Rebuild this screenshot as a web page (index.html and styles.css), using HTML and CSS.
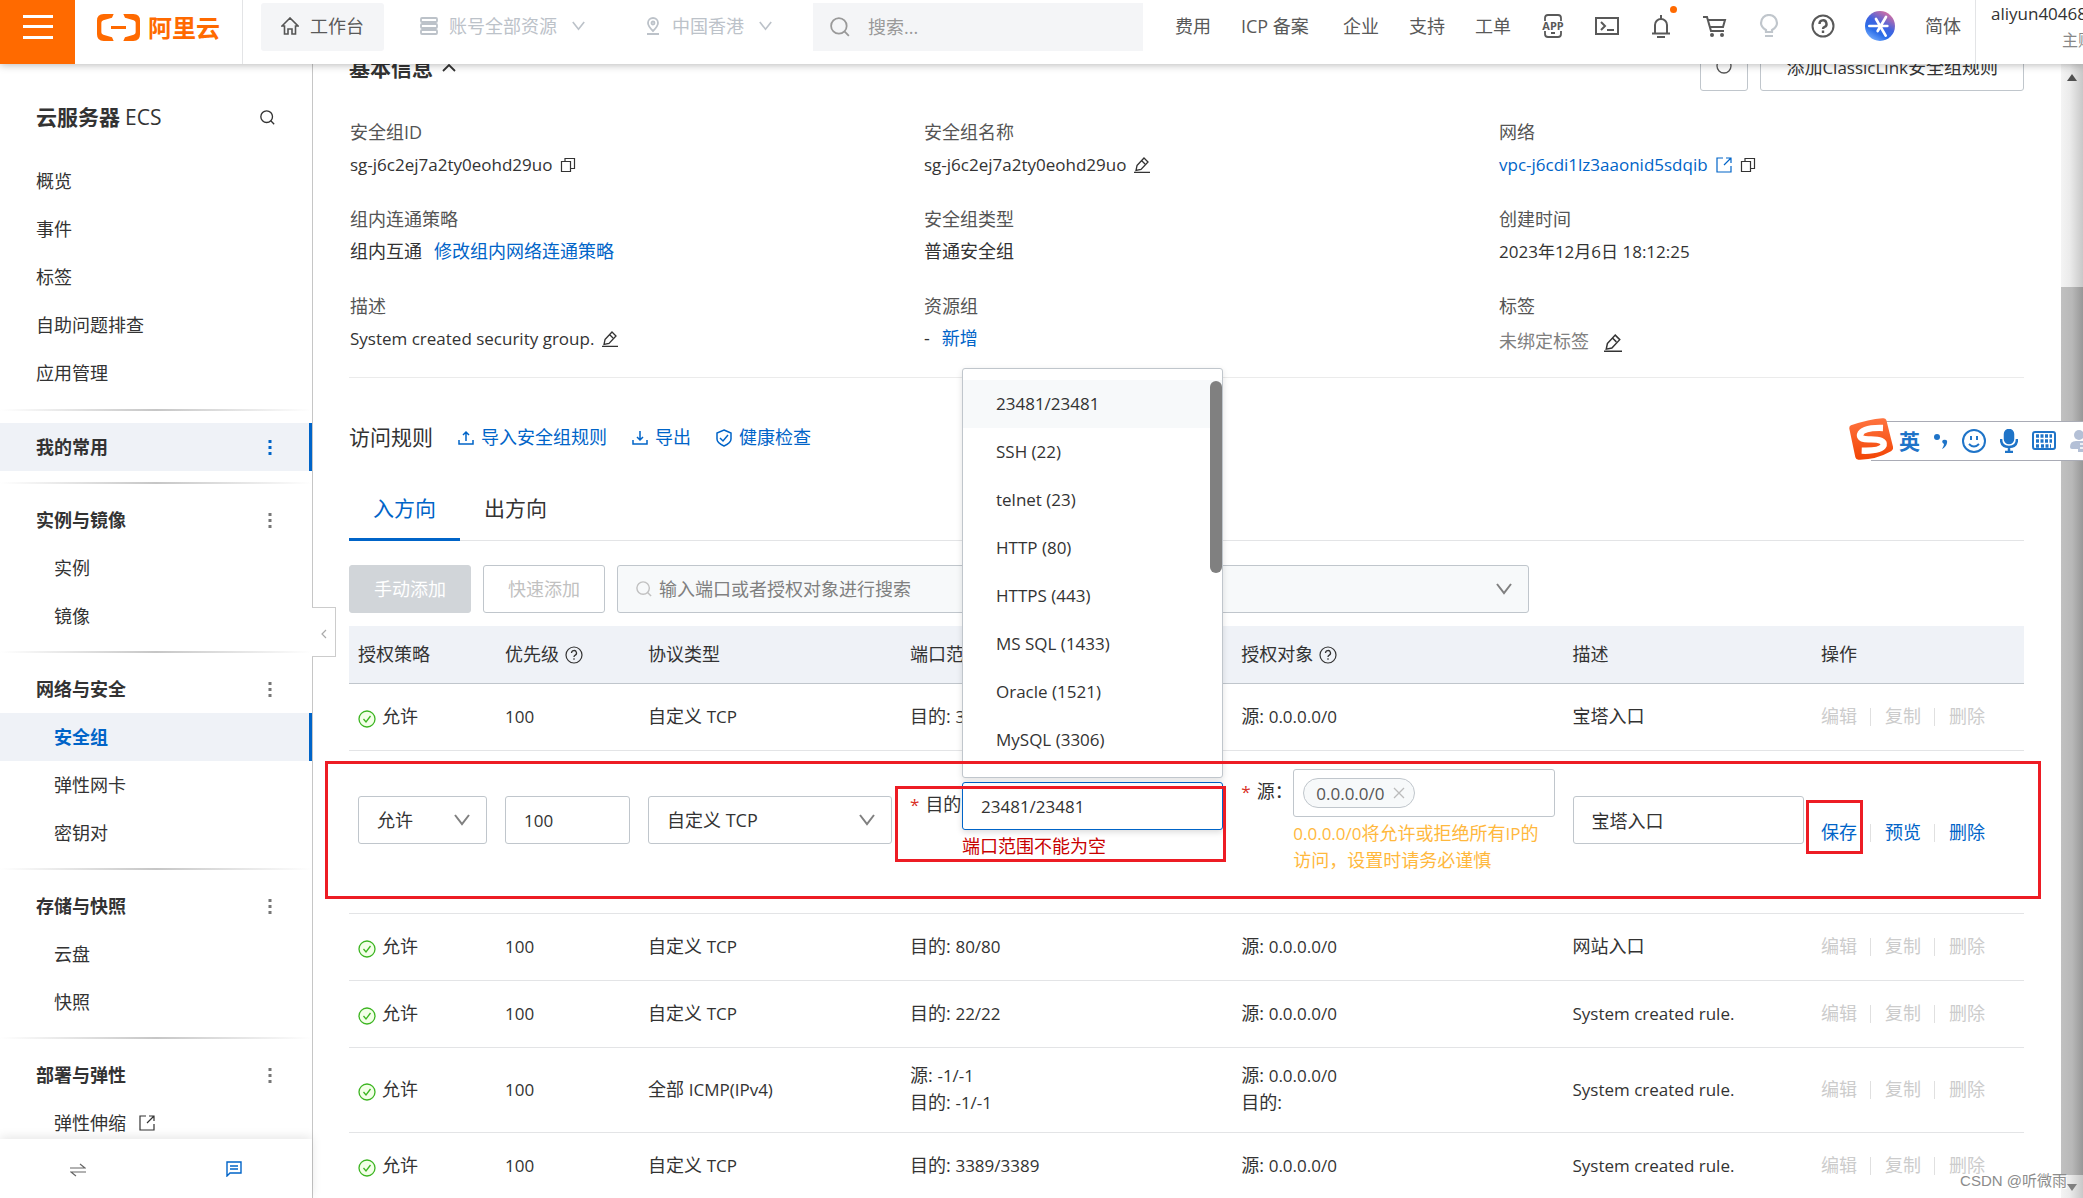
FILE: index.html
```html
<!DOCTYPE html>
<html lang="zh-CN">
<head>
<meta charset="utf-8">
<title>云服务器 ECS - 安全组</title>
<link rel="stylesheet" href="styles.css">
</head>
<body>
<svg class="sprite" aria-hidden="true">
  <symbol id="i-chev" viewBox="0 0 16 12"><path d="M1 1l7 9 7-9" fill="none" stroke="currentColor" stroke-width="2"/></symbol>
  <symbol id="i-search" viewBox="0 0 18 18"><circle cx="8" cy="8" r="7" fill="none" stroke="currentColor" stroke-width="1.600"/><path d="M13 13l4 4" stroke="currentColor" stroke-width="1.600"/></symbol>
  <symbol id="i-copy" viewBox="0 0 16 16"><path d="M1.500 4.500h9v10h-9zM5 4V1.500h9.500v10H11" fill="none" stroke="currentColor" stroke-width="1.200"/></symbol>
  <symbol id="i-edit" viewBox="0 0 16 16"><path d="M0 15.300h16M3 8.500l7-7.500 4 4-7 7.500-5 1zM8 4l3 3" fill="none" stroke="currentColor" stroke-width="1.300"/></symbol>
  <symbol id="i-ext" viewBox="0 0 16 16"><path d="M7 1H1v14h14V9M10 1h5v5M15 1L8 8" fill="none" stroke="currentColor" stroke-width="1.200"/></symbol>
  <symbol id="i-up" viewBox="0 0 16 16"><path d="M1 10v4h14v-4M8 11V2M5 5l3-3 3 3" fill="none" stroke="currentColor" stroke-width="1.500"/></symbol>
  <symbol id="i-down" viewBox="0 0 16 16"><path d="M1 10v4h14v-4M8 1v9M5 7l3 3 3-3" fill="none" stroke="currentColor" stroke-width="1.500"/></symbol>
  <symbol id="i-shield" viewBox="0 0 16 18"><path d="M8 1l7 3v6q0 4-7 7Q1 14 1 10V4zM4 9l3 3 5-6" fill="none" stroke="currentColor" stroke-width="1.500"/></symbol>
  <symbol id="i-help" viewBox="0 0 18 18"><circle cx="9" cy="9" r="8" fill="none" stroke="currentColor" stroke-width="1.200"/><path d="M6.500 7a2.500 2.500 0 1 1 3.500 2.300Q9 10 9 11M9 12.200v1.600" fill="none" stroke="currentColor" stroke-width="1.300"/></symbol>
  <symbol id="i-ok" viewBox="0 0 18 18"><circle cx="9" cy="9" r="8" fill="#f3ffe8" stroke="#3cb521" stroke-width="1.300"/><path d="M5.500 9l2.500 3 4.500-6" fill="none" stroke="#3cb521" stroke-width="1.300"/></symbol>
  <symbol id="i-dots" viewBox="0 0 4 16"><path d="M.500 1h3v3h-3zM.500 7h3v3h-3zM.500 13h3v3h-3z" fill="currentColor"/></symbol>
</svg>

<div class="shell">
<header class="top">
  <button class="burger" aria-label="菜单"><svg width="30" height="24" viewBox="0 0 30 24"><path d="M0 1.500h30M0 11.500h30M0 22.500h30" stroke="#fff" stroke-width="3"/></svg></button>
  <a class="logo" href="#">
    <svg width="43" height="27" viewBox="291 42 129 81" fill="#ff6a00"><path d="M341 42H311Q291 42 291 62V103Q291 123 311 123H341L336 112 310 104Q304 102 304 97V68Q304 63 310 61L336 53ZM370 42H400Q420 42 420 62V103Q420 123 400 123H370L375 112 401 104Q407 102 407 97V68Q407 63 401 61L375 53ZM333 78H378V87H333Z"/></svg>
    <span>阿里云</span>
  </a>
  <a class="bench" href="#"><svg width="18" height="18" viewBox="0 0 18 18"><path d="M1 9l8-8 8 8h-2.500v8H11v-5H7v5H3.500V9z" fill="none" stroke="#555" stroke-width="1.600"/></svg>工作台</a>
  <button class="pick pick-account"><svg width="18" height="18" viewBox="0 0 18 18" fill="none" stroke="currentColor" stroke-width="1.800"><rect x="1" y="1" width="16" height="4" rx="1"/><rect x="1" y="7" width="16" height="4" rx="1"/><rect x="1" y="13" width="16" height="4" rx="1"/></svg><span>账号全部资源</span><svg class="chev-s"><use href="#i-chev"/></svg></button>
  <button class="pick pick-region"><svg width="16" height="18" viewBox="0 0 16 18" fill="none" stroke="currentColor" stroke-width="1.800"><path d="M8 14Q3 9 3 6a5 5 0 0 1 10 0Q13 9 8 14zM2 17h12"/><circle cx="8" cy="6" r="1.500"/></svg><span>中国香港</span><svg class="chev-s"><use href="#i-chev"/></svg></button>
  <label class="find"><svg width="20" height="20"><use href="#i-search"/></svg><input type="text" placeholder="搜索..." aria-label="搜索"></label>
  <nav class="tools">
    <a href="#">费用</a><a class="icp" href="#">ICP 备案</a><a href="#">企业</a><a href="#">支持</a><a href="#">工单</a>
    <button aria-label="App"><svg width="24" height="24" viewBox="0 0 24 24"><path d="M4 7V4q0-3 3-3h10q3 0 3 3v3M4 17v3q0 3 3 3h10q3 0 3-3v-3M10 19h4" fill="none" stroke="currentColor" stroke-width="1.800"/><text x="12" y="16" text-anchor="middle" font-family="Open Sans, sans-serif" font-size="11" font-weight="700" fill="currentColor">APP</text></svg></button>
    <button aria-label="Cloud Shell"><svg width="24" height="24" viewBox="0 0 24 24"><path d="M1 4h22v16H1zM6 8l4 4-4 4M12 16h7" fill="none" stroke="currentColor" stroke-width="2"/></svg></button>
    <button class="bell" aria-label="消息"><svg width="24" height="24" viewBox="0 0 24 24"><path d="M6 19V11a6 6 0 0 1 12 0v8M3 19.500h18M12 1v4M8 23h8" fill="none" stroke="currentColor" stroke-width="2"/></svg><i></i></button>
    <button aria-label="购物车"><svg width="24" height="24" viewBox="0 0 24 24"><path d="M0 3h4l4 14h13M5 6h17l-2 7H7" fill="none" stroke="currentColor" stroke-width="2"/><circle cx="9" cy="21" r="2" fill="currentColor"/><circle cx="19" cy="21" r="2" fill="currentColor"/></svg></button>
    <button class="bulb" aria-label="提示"><svg width="24" height="24" viewBox="0 0 24 24"><path d="M9 18v-2Q4 13 4 9a8 8 0 0 1 16 0q0 4-5 7v2zM8 22h8" fill="none" stroke="currentColor" stroke-width="2.200"/></svg></button>
    <button aria-label="帮助"><svg width="24" height="24" viewBox="0 0 24 24"><circle cx="12" cy="12" r="10.500" fill="none" stroke="currentColor" stroke-width="2"/><path d="M8.500 10a3.500 3.500 0 1 1 5 3Q12 13.500 12 15M12 16.500v2.500" fill="none" stroke="currentColor" stroke-width="2.400"/></svg></button>
    <button class="ball" aria-label="AI 助理"><svg width="30" height="30" viewBox="0 0 90 90"><defs><linearGradient id="ball" x1=".8" y1="0" x2=".2" y2="1"><stop offset="0" stop-color="#e8709a"/><stop offset=".45" stop-color="#3f63e0"/><stop offset=".7" stop-color="#2b6de8"/><stop offset="1" stop-color="#7db4ff"/></linearGradient></defs><circle cx="45" cy="45" r="45" fill="url(#ball)"/><path d="M13 45h54M63 18L38 60M33 24l29 50" stroke="#fff" stroke-width="8" stroke-linecap="round"/></svg></button>
    <a href="#">简体</a>
  </nav>
  <div class="user"><span class="lat">aliyun40468</span><small>主账</small></div>
</header>

<aside class="side">
  <div class="side-scroll">
    <h1><b>云服务器</b> ECS <svg width="15" height="15"><use href="#i-search"/></svg></h1>
    <ul><li><a href="#">概览</a></li><li><a href="#">事件</a></li><li><a href="#">标签</a></li><li><a href="#">自助问题排查</a></li><li><a href="#">应用管理</a></li></ul>
    <hr>
    <h2 class="on">我的常用<svg class="dots"><use href="#i-dots"/></svg></h2>
    <hr>
    <h2>实例与镜像<svg class="dots"><use href="#i-dots"/></svg></h2>
    <ul class="sub"><li><a href="#">实例</a></li><li><a href="#">镜像</a></li></ul>
    <hr>
    <h2>网络与安全<svg class="dots"><use href="#i-dots"/></svg></h2>
    <ul class="sub"><li><a class="on" href="#">安全组</a></li><li><a href="#">弹性网卡</a></li><li><a href="#">密钥对</a></li></ul>
    <hr>
    <h2>存储与快照<svg class="dots"><use href="#i-dots"/></svg></h2>
    <ul class="sub"><li><a href="#">云盘</a></li><li><a href="#">快照</a></li></ul>
    <hr>
    <h2>部署与弹性<svg class="dots"><use href="#i-dots"/></svg></h2>
    <ul class="sub"><li><a href="#">弹性伸缩<svg class="ic"><use href="#i-ext"/></svg></a></li></ul>
  </div>
  <div class="side-foot">
    <button aria-label="切换"><svg width="16" height="14" viewBox="0 0 16 14"><path d="M0 5h15l-5-4M16 9H1l5 4" fill="none" stroke="#666" stroke-width="1.200"/></svg></button>
    <button aria-label="反馈"><svg width="16" height="16" viewBox="0 0 16 16"><path d="M1 15V1h14v11H4zM4 5h8M4 8h8" fill="none" stroke="#0064c8" stroke-width="1.400"/></svg></button>
  </div>
  <button class="fold" aria-label="收起"><svg width="6" height="10" viewBox="0 0 6 10"><path d="M5 1L1 5l4 4" fill="none" stroke="#aaa" stroke-width="1.200"/></svg></button>
</aside>

<main>
  <div class="head">
    <h2>基本信息 <svg class="chev-up" viewBox="0 0 14 9"><path d="M1 8l6-6 6 6" fill="none" stroke="#333" stroke-width="1.800"/></svg></h2>
    <button class="btn btn-refresh" aria-label="刷新"><svg width="16" height="16" viewBox="0 0 16 16"><circle cx="8" cy="8" r="7" fill="none" stroke="#555" stroke-width="1.300"/></svg></button>
    <button class="btn btn-link">添加<span class="lat">ClassicLink</span>安全组规则</button>
  </div>

  <dl class="info">
    <div><dt>安全组ID</dt><dd class="lat">sg-j6c2ej7a2ty0eohd29uo<svg class="ic"><use href="#i-copy"/></svg></dd></div>
    <div><dt>安全组名称</dt><dd class="lat">sg-j6c2ej7a2ty0eohd29uo<svg class="ic"><use href="#i-edit"/></svg></dd></div>
    <div><dt>网络</dt><dd class="lat"><a href="#">vpc-j6cdi1lz3aaonid5sdqib<svg class="ic"><use href="#i-ext"/></svg></a><svg class="ic"><use href="#i-copy"/></svg></dd></div>
    <div><dt>组内连通策略</dt><dd>组内互通<a class="gap" href="#">修改组内网络连通策略</a></dd></div>
    <div><dt>安全组类型</dt><dd>普通安全组</dd></div>
    <div><dt>创建时间</dt><dd class="lat">2023年12月6日 18:12:25</dd></div>
    <div><dt>描述</dt><dd class="lat">System created security group.<svg class="ic"><use href="#i-edit"/></svg></dd></div>
    <div><dt>资源组</dt><dd>-<a class="gap" href="#">新增</a></dd></div>
    <div><dt>标签</dt><dd class="none">未绑定标签<svg class="ic-big"><use href="#i-edit"/></svg></dd></div>
  </dl>

  <div class="rules">
    <h3>访问规则</h3>
    <a href="#"><svg class="ic"><use href="#i-up"/></svg>导入安全组规则</a>
    <a href="#"><svg class="ic"><use href="#i-down"/></svg>导出</a>
    <a href="#"><svg class="ic ic-tall"><use href="#i-shield"/></svg>健康检查</a>
  </div>
  <div class="tabs" role="tablist"><button role="tab" class="on" aria-selected="true">入方向</button><button role="tab">出方向</button></div>

  <div class="bar">
    <button class="btn btn-fill" disabled>手动添加</button>
    <button class="btn btn-off" disabled>快速添加</button>
    <label class="filter"><svg width="16" height="16"><use href="#i-search"/></svg><input type="text" placeholder="输入端口或者授权对象进行搜索" aria-label="搜索规则"></label>
    <span class="sel filter-sel"><select aria-label="筛选"><option></option></select><svg class="chev"><use href="#i-chev"/></svg></span>
  </div>

  <table>
    <colgroup><col class="c1"><col class="c2"><col class="c3"><col class="c4"><col class="c5"><col class="c6"><col class="c7"></colgroup>
    <thead><tr><th>授权策略</th><th>优先级<svg class="q"><use href="#i-help"/></svg></th><th>协议类型</th><th>端口范围</th><th>授权对象<svg class="q"><use href="#i-help"/></svg></th><th>描述</th><th>操作</th></tr></thead>
    <tbody>
      <tr><td><svg class="ok"><use href="#i-ok"/></svg>允许</td><td class="lat">100</td><td>自定义 <span class="lat">TCP</span></td><td>目的: <span class="lat">31306/31306</span></td><td>源: <span class="lat">0.0.0.0/0</span></td><td>宝塔入口</td><td><div class="ops off"><button disabled>编辑</button><button disabled>复制</button><button disabled>删除</button></div></td></tr>
      <tr class="edit">
        <td><span class="mark mark-row"></span><span class="sel"><select aria-label="授权策略"><option>允许</option></select><svg class="chev"><use href="#i-chev"/></svg></span></td>
        <td><input class="box box-pri lat" type="text" value="100" aria-label="优先级"></td>
        <td><span class="sel"><select aria-label="协议类型"><option>自定义 TCP</option></select><svg class="chev"><use href="#i-chev"/></svg></span></td>
        <td class="port"><span class="mark mark-port"></span>
          <div class="field"><label for="port"><em>*</em>目的</label>
            <div class="combo">
              <input id="port" class="box box-focus lat" type="text" value="23481/23481">
              <ul class="menu lat"><li class="on">23481/23481</li><li>SSH (22)</li><li>telnet (23)</li><li>HTTP (80)</li><li>HTTPS (443)</li><li>MS SQL (1433)</li><li>Oracle (1521)</li><li>MySQL (3306)</li></ul>
              <p class="err">端口范围不能为空</p>
            </div></div></td>
        <td class="src"><div class="field"><label for="src"><em>*</em>源：</label>
            <div class="combo"><div class="box tags"><span class="tag lat">0.0.0.0/0<svg width="12" height="12" viewBox="0 0 12 12"><path d="M1 1l10 10M11 1L1 11" stroke="#bbb" stroke-width="1.300"/></svg></span><input id="src" type="text"></div>
              <p class="warn"><span class="lat">0.0.0.0/0</span>将允许或拒绝所有<span class="lat">IP</span>的访问，设置时请务必谨慎</p></div></div></td>
        <td><input class="box box-desc" type="text" value="宝塔入口" aria-label="描述"></td>
        <td class="act"><span class="mark mark-save"></span><div class="ops"><button>保存</button><button>预览</button><button>删除</button></div></td>
      </tr>
      <tr><td><svg class="ok"><use href="#i-ok"/></svg>允许</td><td class="lat">100</td><td>自定义 <span class="lat">TCP</span></td><td>目的: <span class="lat">80/80</span></td><td>源: <span class="lat">0.0.0.0/0</span></td><td>网站入口</td><td><div class="ops off"><button disabled>编辑</button><button disabled>复制</button><button disabled>删除</button></div></td></tr>
      <tr><td><svg class="ok"><use href="#i-ok"/></svg>允许</td><td class="lat">100</td><td>自定义 <span class="lat">TCP</span></td><td>目的: <span class="lat">22/22</span></td><td>源: <span class="lat">0.0.0.0/0</span></td><td class="lat">System created rule.</td><td><div class="ops off"><button disabled>编辑</button><button disabled>复制</button><button disabled>删除</button></div></td></tr>
      <tr><td><svg class="ok"><use href="#i-ok"/></svg>允许</td><td class="lat">100</td><td>全部 <span class="lat">ICMP(IPv4)</span></td><td>源: <span class="lat">-1/-1</span><br>目的: <span class="lat">-1/-1</span></td><td>源: <span class="lat">0.0.0.0/0</span><br>目的:</td><td class="lat">System created rule.</td><td><div class="ops off"><button disabled>编辑</button><button disabled>复制</button><button disabled>删除</button></div></td></tr>
      <tr><td><svg class="ok"><use href="#i-ok"/></svg>允许</td><td class="lat">100</td><td>自定义 <span class="lat">TCP</span></td><td>目的: <span class="lat">3389/3389</span></td><td>源: <span class="lat">0.0.0.0/0</span></td><td class="lat">System created rule.</td><td><div class="ops off"><button disabled>编辑</button><button disabled>复制</button><button disabled>删除</button></div></td></tr>
    </tbody>
  </table>
</main>

<div class="scroll" aria-hidden="true"><i class="arr arr-up"></i><i class="track"></i><i class="thumb"></i><i class="arr arr-down"></i></div>
</div>

<div class="ime">
  <svg class="ime-logo" width="44" height="42" viewBox="0 0 132 126"><defs><linearGradient id="so" x1="0" y1="0" x2="0" y2="1"><stop offset="0" stop-color="#ff7440"/><stop offset="1" stop-color="#f24404"/></linearGradient></defs><path d="M6 22Q0 24 1 32L19 118Q21 126 30 125 80 126 126 100 134 95 132 86L112 6Q109-1 100 1 60 4 6 22Z" fill="url(#so)"/><path d="M102 30Q40 28 33 50 30 66 66 64 108 64 104 82 96 100 38 98" fill="none" stroke="#fff" stroke-width="19"/></svg>
  <b>英</b>
  <svg width="14" height="16" viewBox="0 0 14 16" fill="#1f74c8"><circle cx="3" cy="4" r="3"/><path d="M9 7q5-1 4 3-1 4-5 6 2-3 2-5-3-2-1-4z"/></svg>
  <svg width="24" height="24" viewBox="0 0 24 24" fill="none" stroke="#1f74c8" stroke-width="2"><circle cx="12" cy="12" r="11"/><path d="M7 15q5 5 10 0M9 7v4M15 7v4"/></svg>
  <svg width="18" height="24" viewBox="0 0 18 24" fill="none" stroke="#1f74c8" stroke-width="2.500"><rect x="5" y="1" width="8" height="13" rx="4" fill="#1f74c8"/><path d="M1 10q0 8 8 8t8-8M9 18v5M5 23h8"/></svg>
  <svg width="24" height="20" viewBox="0 0 24 20" fill="none" stroke="#1f74c8" stroke-width="2"><rect x="1" y="1" width="22" height="17" rx="2"/><path d="M4 5h16M4 10h16M4 15h3M9 15h10" stroke-width="3.500" stroke-dasharray="3 1.500"/></svg>
  <svg class="ime-man" width="16" height="22" viewBox="0 0 16 22" fill="#b4c0d6"><circle cx="9" cy="5" r="5"/><path d="M0 17Q0 11 6 11H16V22H8V19H2Q0 19 0 17Z"/><path d="M10 14h6M10 18h6" stroke="#fff" stroke-width="1.500"/></svg>
</div>
<div class="stamp">CSDN @听微雨</div>
</body>
</html>
```
FILE: styles.css
```css
* { box-sizing: border-box; }
body { margin: 0; height: 100vh; overflow: hidden; background: #fff; color: #333; font: 18px/27px "Open Sans", "Noto Sans CJK SC", sans-serif; }
h1, h2, h3, ul, dl, dd, p { margin: 0; padding: 0; }
ul { list-style: none; }
a { color: #0064c8; text-decoration: none; }
button { border: 0; padding: 0; background: none; color: inherit; font: inherit; }
input, select { font: inherit; color: inherit; }
svg { flex: none; }
.sprite { position: absolute; width: 0; height: 0; }
.lat { font-size: 17px; }

.shell { display: grid; grid-template: 64px minmax(0, 1fr) / 313px minmax(0, 1fr) 22px; height: 100vh; }

/* top bar */
.top { grid-column: 1 / -1; position: relative; z-index: 10; display: flex; align-items: flex-start; background: #fff; color: #595959; box-shadow: 0 1px 8px rgba(0, 0, 0, .28); overflow: clip; overflow-clip-margin: 12px; }
.top a { color: inherit; white-space: nowrap; }
.burger { flex: none; width: 75px; height: 64px; padding-bottom: 10px; background: #ff6a00; display: flex; align-items: center; justify-content: center; }
.top .logo { flex: none; width: 168px; height: 64px; padding: 0 22px 9px; border-right: 1px solid #e3e4e6; display: flex; align-items: center; gap: 8px; color: #ff6a00; font-size: 24px; font-weight: 700; }
.bench { flex: none; display: flex; align-items: center; gap: 11px; height: 48px; margin: 3px 0 0 18px; padding: 0 20px 2px; border-radius: 3px; background: #f4f5f7; }
.pick { flex: none; display: flex; align-items: center; gap: 11px; height: 46px; margin-top: 3px; color: #bcc2c9; white-space: nowrap; }
.pick .chev-s { margin-left: 4px; }
.pick-account { margin-left: 36px; }
.pick-region { margin-left: 60px; }
.chev-s { width: 13px; height: 10px; }
.find { display: flex; align-items: center; gap: 16px; width: 330px; height: 48px; margin: 3px 0 0 41px; padding: 0 17px; background: #f4f5f7; color: #999; }
.find input { width: 100%; min-width: 0; border: 0; background: none; }
input::placeholder { color: #999; opacity: 1; }
.tools { flex: 1 0 auto; display: flex; align-items: center; gap: 30px; height: 48px; margin: 2px 14px 0 32px; }
.tools button { display: flex; }
.icp { min-width: 72px; }
.bell { position: relative; }
.bell i { position: absolute; right: -4px; top: -8px; width: 7px; height: 7px; border-radius: 50%; background: #ff6a00; }
.bulb { color: #c0c6cc; }
.user { flex: none; width: 108px; height: 64px; padding-left: 15px; border-left: 1px solid #e3e4e6; display: flex; flex-direction: column; white-space: nowrap; color: #333; overflow: hidden; }
.user small { padding-left: 71px; font-size: 16px; color: #888; }

/* side navigation */
.side { position: relative; min-height: 0; display: flex; flex-direction: column; border-right: 1px solid #c6c6c6; }
.side-scroll { flex: 1; min-height: 0; overflow: hidden; padding-top: 29px; }
.side h1 { display: flex; align-items: center; gap: 5px; height: 48px; margin-bottom: 16px; padding: 0 37px 0 36px; font-size: 21px; font-weight: 400; }
.side h1 svg { margin-left: auto; }
.side h2, .side li a { display: flex; align-items: center; height: 48px; padding: 0 40px 0 36px; font-size: 18px; color: #333; }
.side h2 { justify-content: space-between; font-weight: 700; }
.side .sub a { padding-left: 54px; }
.side .sub .ic { margin-left: 13px; }
.side .on { background: #eff2f7; border-right: 3px solid #0064c8; padding-right: 37px; }
.side .sub .on { color: #0064c8; font-weight: 700; }
.side hr { height: 2px; margin: 12px 0; border: 0; background: linear-gradient(90deg, #fff, #c6c6c6 50%, #fff); }
.side hr ~ hr { margin-top: 11px; }
.dots { width: 4px; height: 16px; color: #777; }
.on .dots { color: #0064c8; }
.side-foot { display: flex; justify-content: space-around; align-items: center; height: 59px; padding-top: 4px; box-shadow: 0 -2px 10px rgba(0, 0, 0, .1); }
.fold { position: absolute; left: 312px; top: 543px; z-index: 2; width: 24px; height: 50px; border: 1px solid #ccc; border-left: 0; background: #fff; }

/* content */
main { min-width: 0; min-height: 0; overflow: hidden; padding: 0 37px 0 36px; }
.head { display: flex; align-items: flex-end; gap: 12px; height: 48px; margin-top: -21px; }
.head h2 { flex: 1; font-size: 21px; line-height: 45px; }
.chev-up { width: 14px; height: 9px; vertical-align: 4px; margin-left: 4px; }
.btn { height: 48px; border: 1px solid #c0c6cc; border-radius: 3px; background: #fff; }
.btn-refresh { width: 48px; }
.btn-link { padding: 0 25px; }
.ic { width: 16px; height: 16px; margin-left: 8px; vertical-align: -2px; }
.ic-tall { height: 18px; }
.ic-big { width: 18px; height: 18px; margin-left: 15px; vertical-align: -4px; color: #333; }
.info { display: grid; grid-template-columns: 574px 575px 1fr; row-gap: 27px; padding: 28px 1px 24px; border-bottom: 1px solid #ebebeb; }
.info dt { color: #555; margin-bottom: 5px; }
.info dd { height: 28px; white-space: nowrap; }
.info .none { padding-top: 3px; color: #808080; }
.gap { margin-left: 12px; }
.rules { display: flex; align-items: center; gap: 25px; margin: 46px 0 24px; }
.rules h3 { font-size: 21px; font-weight: 400; }
.rules a { display: flex; align-items: center; gap: 7px; }
.rules .ic { margin: 0; }
.tabs { display: flex; height: 66px; border-bottom: 1px solid #e3e4e6; }
.tabs button { height: 66px; padding: 0 24px; font-size: 21px; }
.tabs .on { color: #0064c8; border-bottom: 3px solid #0064c8; padding-top: 3px; }
.bar { display: flex; gap: 12px; margin: 24px 0 13px; }
.btn-fill { width: 122px; border-color: #d1d5d9; background: #d1d5d9; color: #fff; }
.btn-off { width: 122px; color: #c1c1c1; }
.filter { display: flex; align-items: center; gap: 7px; width: 450px; height: 48px; padding: 0 18px; border: 1px solid #c0c6cc; border-radius: 3px; background: #f7f9fa; color: #c1c1c1; }
.filter input { flex: 1; min-width: 0; border: 0; background: none; padding: 0; }
.filter input::placeholder { color: #808080; }
.sel { position: relative; display: block; }
.sel select { display: block; width: 100%; height: 48px; padding: 0 18px; appearance: none; border: 1px solid #c0c6cc; border-radius: 3px; background: #fff; }
.chev { position: absolute; right: 17px; top: 18px; width: 16px; height: 12px; color: #808080; pointer-events: none; }
.filter-sel { width: 450px; }
.filter-sel select { background: #f7f9fa; }

/* rules table */
table { width: 100%; table-layout: fixed; border-collapse: separate; border-spacing: 0; }
.c1 { width: 147px; }
.c2 { width: 143px; }
.c3 { width: 262px; }
.c4 { width: 20%; }
.c5 { width: 20%; }
.c6 { width: 15%; }
.c7 { width: 212px; }
th { height: 58px; padding: 0 9px; background: #eff2f7; border-bottom: 1px solid #c0c6cc; text-align: left; font-weight: 400; }
td { height: 67px; padding: 14px 9px 16px; border-bottom: 1px solid #e3e4e6; }
.q { width: 18px; height: 18px; margin-left: 6px; vertical-align: -3px; }
.ok { width: 18px; height: 18px; margin-right: 6px; vertical-align: -5px; }
.ops { display: flex; color: #0064c8; }
.ops button + button::before { content: ""; display: inline-block; width: 1px; height: 18px; margin: 0 14px 0 13px; background: #e0e0e0; vertical-align: -3px; }
.ops.off { color: #ccc; }
.edit { position: relative; }
.edit td { height: 163px; padding: 45px 9px 0; vertical-align: top; }
.edit .port { position: relative; padding-top: 31px; }
.edit .src { padding-top: 18px; }
.edit .act { position: relative; padding-top: 0; vertical-align: middle; }
.box { display: block; width: 100%; height: 48px; padding: 0 18px; border: 1px solid #c0c6cc; border-radius: 3px; background: #fff; outline: 0; }
.box-pri { width: 125px; }
.box-desc { width: 231px; }
.box-focus { border-color: #0064c8; box-shadow: 0 2px 6px rgba(0, 0, 0, .15); }
.field { display: flex; }
.field label { flex: none; width: 52px; line-height: 45px; white-space: nowrap; }
.field em { margin-right: 6px; color: #d93026; font-style: normal; font-size: 17px; }
.combo { position: relative; flex: 1; min-width: 0; }
.err { margin-top: 3px; color: #c80000; }
.warn { margin-top: 3px; color: #ffb83d; }
.tags { display: flex; align-items: center; padding: 0 9px; }
.tags input { flex: 1; min-width: 0; border: 0; outline: 0; }
.tag { display: flex; align-items: center; gap: 8px; height: 30px; padding: 0 9px 0 12px; border: 1px solid #c0c6cc; border-radius: 15px; background: #f7f9fa; color: #555; }
.menu { position: absolute; left: 0; right: 0; top: -414px; z-index: 3; padding: 11px 0 13px; border: 1px solid #c0c6cc; border-radius: 3px; background: #fff; box-shadow: 0 2px 6px rgba(0, 0, 0, .12); }
.menu li { height: 48px; padding-left: 33px; line-height: 48px; }
.menu .on { background: #f7f9fa; }
.menu::after { content: ""; position: absolute; right: 0; top: 12px; width: 12px; height: 192px; border-radius: 6px; background: #808080; }
.mark { position: absolute; z-index: 4; border: 3px solid #ed1c24; pointer-events: none; }
.mark-row { left: -24px; right: -17px; top: 10px; bottom: 15px; }
.mark-port { left: -6px; right: 6px; top: 35px; height: 76px; }
.mark-save { left: -6px; width: 57px; top: 49px; height: 54px; }

/* scroll bar */
.scroll { display: flex; flex-direction: column; align-items: center; background: linear-gradient(90deg, #f4f4f4, #ebebeb 40%, #c8c8c8); padding: 10px 0 7px; }
.arr { border: 5px solid transparent; }
.arr-up { border-bottom: 7px solid #505050; border-top: 0; }
.arr-down { border-top: 7px solid #808080; border-bottom: 0; margin-top: 9px; }
.track { flex: 206; }
.thumb { flex: 888; width: 100%; background: linear-gradient(90deg, #c1c1c1, #b8b8b8 50%, #979797); }

/* input method bar */
.ime { position: absolute; right: 0; top: 421px; z-index: 20; display: flex; align-items: center; gap: 14px; width: 212px; height: 40px; padding-left: 28px; border: 1px solid #a9abb5; border-width: 1px 0; background: #fff; }
.ime b { color: #1f74c8; font-size: 21px; }
.ime-logo { position: absolute; left: -22px; top: -4px; }
.stamp { position: absolute; right: 16px; bottom: 4px; z-index: 20; color: #8c8c8c; font: 15px/27px "Liberation Sans", "Noto Sans CJK SC", sans-serif; text-shadow: 1px 1px 0 #fff; }
```
